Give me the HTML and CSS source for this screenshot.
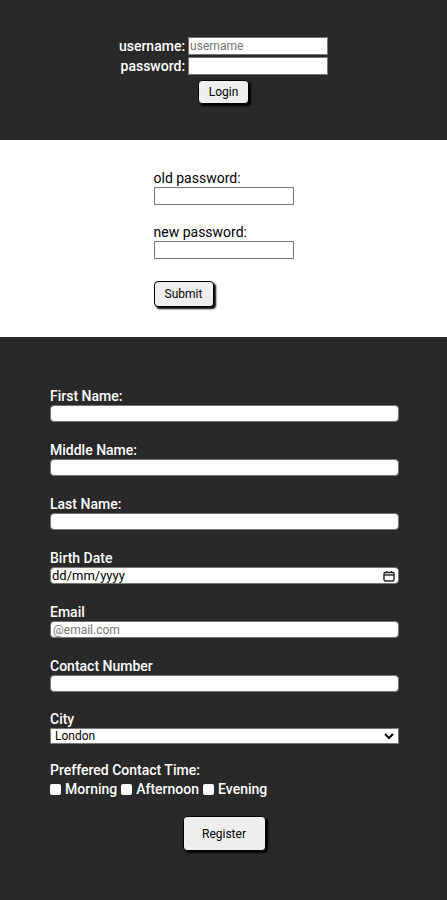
FILE: index.html
```html
<!DOCTYPE html>
<html>
<head>
<meta charset="utf-8">
<link rel="stylesheet" href="styles.css">
</head>
<body>
<section class="login">
  <form class="login-form">
    <div class="login-grid">
      <label class="login-label">username:</label>
      <input class="login-input" type="text" placeholder="username">
      <label class="login-label">password:</label>
      <input class="login-input" type="password">
    </div>
    <button class="btn login-btn" type="button">Login</button>
  </form>
</section>
<section class="change">
  <form class="change-form">
    <label class="change-label">old password:</label>
    <input class="change-input" type="password">
    <label class="change-label">new password:</label>
    <input class="change-input" type="password">
    <button class="btn submit-btn" type="button">Submit</button>
  </form>
</section>
<section class="register">
  <form class="reg-form">
    <div class="field"><label class="reg-label">First Name:</label><input class="reg-input" type="text"></div>
    <div class="field"><label class="reg-label">Middle Name:</label><input class="reg-input" type="text"></div>
    <div class="field"><label class="reg-label">Last Name:</label><input class="reg-input" type="text"></div>
    <div class="field"><label class="reg-label">Birth Date</label>
      <div class="reg-input date-input"><span>dd/mm/yyyy</span>
        <svg class="cal" width="12" height="12" viewBox="0 0 12 12"><rect x="1" y="2.5" width="10" height="8.5" rx="1.5" fill="none" stroke="#222" stroke-width="1.4"/><line x1="1" y1="5" x2="11" y2="5" stroke="#222" stroke-width="1.4"/><line x1="3.5" y1="1" x2="3.5" y2="3" stroke="#222" stroke-width="1.2"/><line x1="8.5" y1="1" x2="8.5" y2="3" stroke="#222" stroke-width="1.2"/></svg>
      </div>
    </div>
    <div class="field"><label class="reg-label">Email</label><input class="reg-input" type="email" placeholder="@email.com"></div>
    <div class="field"><label class="reg-label">Contact Number</label><input class="reg-input" type="text"></div>
    <div class="field city-field"><label class="reg-label">City</label>
      <div class="city-select"><span>London</span>
        <svg width="10" height="8" viewBox="0 0 10 8"><path d="M1 2 L5 6 L9 2" fill="none" stroke="#000" stroke-width="2"/></svg>
      </div>
    </div>
    <div class="field"><label class="reg-label">Preffered Contact Time:</label>
      <div class="checks">
        <span class="check"><span class="box"></span>Morning</span>
        <span class="check"><span class="box"></span>Afternoon</span>
        <span class="check"><span class="box"></span>Evening</span>
      </div>
    </div>
    <div class="reg-actions"><button class="btn register-btn" type="button">Register</button></div>
  </form>
</section>
</body>
</html>
```
FILE: styles.css
```css
html, body { margin: 0; padding: 0; }
body {
  font-family: Roboto, "Liberation Sans", Arial, sans-serif;
  background: #292929;
  width: 447px;
}
.btn {
  font-family: Roboto, "Liberation Sans", Arial, sans-serif;
  font-size: 12px;
  color: #000;
  background: #efefef;
  border: 1px solid #000;
  border-radius: 4px;
  box-shadow: 2px 2px 2px #000;
  padding: 0;
}
.login {
  height: 140px;
  background: #292929;
  box-sizing: border-box;
  padding-top: 37px;
}
.login-form {
  display: flex;
  flex-direction: column;
  align-items: center;
}
.login-grid {
  display: grid;
  grid-template-columns: auto 140px;
  column-gap: 3px;
  row-gap: 2px;
  align-items: center;
}
.login-label {
  color: #fff;
  font-size: 14px;
  font-weight: 500;
  text-align: right;
  line-height: 16px;
}
.login-input {
  box-sizing: border-box;
  width: 140px;
  height: 18px;
  border: 1px solid #767676;
  padding: 0 1px;
  font-family: Roboto, sans-serif;
  font-size: 12px;
  margin: 0;
}
.login-input::placeholder { color: #757575; }
.login-btn {
  margin-top: 5px;
  width: 51px;
  height: 24px;
}
.change {
  background: #fff;
  height: 197px;
  box-sizing: border-box;
  padding-top: 30px;
}
.change-form {
  width: 140px;
  margin: 0 auto;
  display: flex;
  flex-direction: column;
  align-items: flex-start;
}
.change-label {
  font-size: 14px;
  color: #000;
  line-height: 16px;
}
.change-input {
  box-sizing: border-box;
  width: 140px;
  height: 18px;
  border: 1px solid #767676;
  margin: 1px 0 19px;
  padding: 0;
}
.submit-btn {
  margin-top: 3px;
  width: 60px;
  height: 26px;
}
.register {
  padding: 51px 49px 0 50px;
  height: 563px;
  box-sizing: border-box;
}
.reg-form {
  display: flex;
  flex-direction: column;
}
.field {
  display: flex;
  flex-direction: column;
  margin-bottom: 20px;
}
.city-field { margin-top: -1px; margin-bottom: 18px; }
.reg-label {
  color: #fff;
  font-size: 14px;
  font-weight: 500;
  line-height: 16px;
  margin-bottom: 1px;
}
.reg-input {
  box-sizing: border-box;
  width: 349px;
  height: 17px;
  border: 1px solid #767676;
  border-radius: 4px;
  background: #fff;
  margin: 0;
  padding: 0 2px;
  font-family: Roboto, sans-serif;
  font-size: 12px;
}
.reg-input::placeholder { color: #757575; }
.date-input {
  display: flex;
  align-items: center;
  justify-content: space-between;
  font-size: 13px;
  color: #000;
  padding: 0 1px 0 1px;
}
.cal { margin-right: 2px; }
.city-select {
  box-sizing: border-box;
  width: 349px;
  height: 16px;
  border: 1px solid #767676;
  background: #fff;
  display: flex;
  align-items: center;
  justify-content: space-between;
  padding: 0 4px 0 4px;
  font-size: 12px;
  color: #000;
}
.checks {
  display: flex;
  align-items: center;
  margin-top: 2px;
  color: #fff;
  font-size: 14px;
  font-weight: 500;
}
.check {
  display: flex;
  align-items: center;
  margin-right: 4px;
}
.box {
  width: 11px;
  height: 11px;
  background: #fff;
  border-radius: 2px;
  margin-right: 4px;
}
.reg-actions {
  display: flex;
  justify-content: center;
  margin-top: -1px;
}
.register-btn {
  width: 83px;
  height: 35px;
}
```
